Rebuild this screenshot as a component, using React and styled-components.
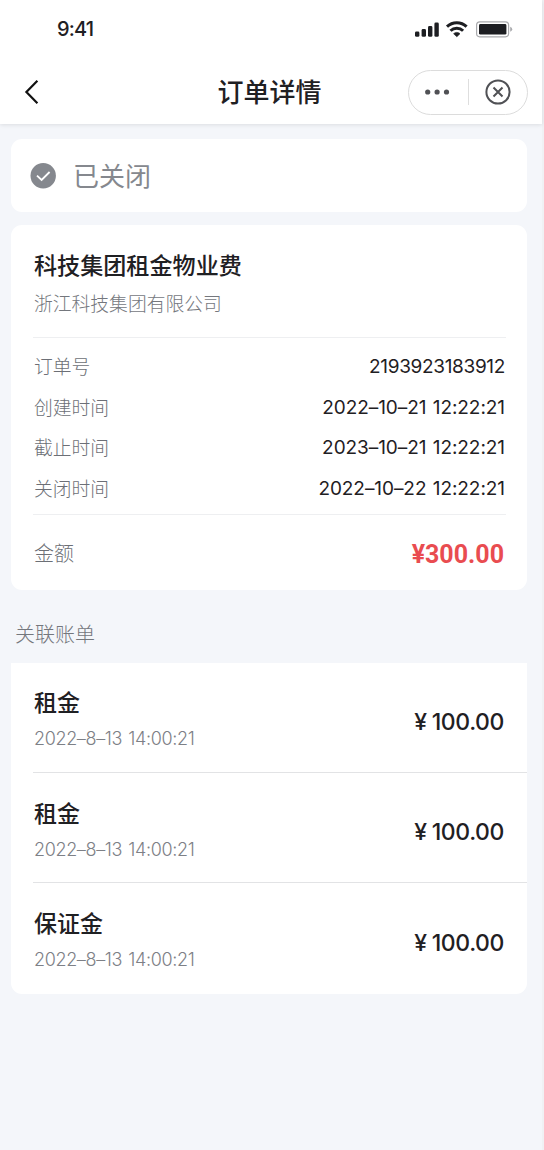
import React from "react";
import styled, { createGlobalStyle } from "styled-components";

const GlobalStyle = createGlobalStyle`
    * {
        box-sizing: border-box;
    }

    body {
        margin: 0;
        background-color: #f4f6fa;
        font-family: "Inter", "Noto Sans CJK SC", sans-serif;
        color: #1f2023;
    }
`;

const Page = styled.div`
    min-height: 1150px;
    background-color: #f4f6fa;
    border-right: 2px solid #f0f1f4;
`;

const Header = styled.header`
    height: 124px;
    background-color: #fff;
    box-shadow: 0 1px 4px rgba(0, 0, 0, 0.1);
`;

const StatusBar = styled.div`
    display: flex;
    justify-content: space-between;
    align-items: center;
    height: 58px;
    padding: 0 29px 0 57px;
`;

const Clock = styled.span`
    font-size: 20px;
    font-weight: 480;
    letter-spacing: -0.8px;
`;

const NavBar = styled.div`
    display: grid;
    grid-template-columns: 131px 1fr 134px;
    align-items: center;
    height: 66px;
    padding: 2px 0 0;
`;

const BackButton = styled.button`
    display: flex;
    width: 44px;
    padding: 0 0 0 24px;
    border: none;
    background: none;
`;

const Title = styled.h1`
    margin: 0;
    padding-top: 1px;
    text-align: center;
    font-size: 26px;
    line-height: 36px;
    font-weight: 500;
`;

const Capsule = styled.div`
    display: flex;
    align-items: center;
    width: 120px;
    height: 45px;
    border: 1px solid #dcdcdc;
    border-radius: 23px;
`;

const CapsuleItem = styled.div`
    flex: 1;
    display: flex;
    justify-content: center;
`;

const CapsuleLine = styled.div`
    width: 1px;
    height: 26px;
    background-color: #dedede;
`;

const Main = styled.main`
    padding: 15px 15px 0 11px;
`;

const StatusCard = styled.section`
    display: flex;
    align-items: center;
    gap: 17px;
    height: 73px;
    padding: 0 19px;
    border-radius: 11px;
    background-color: #fff;
`;

const StatusText = styled.span`
    padding-top: 2px;
    font-size: 26px;
    line-height: 36px;
    color: #85888e;
`;

const DetailCard = styled.section`
    height: 365px;
    margin-top: 13px;
    padding: 24px 21px 0 22px;
    border-radius: 11px;
    background-color: #fff;
`;

const OrderName = styled.h2`
    margin: 0;
    padding-left: 1px;
    font-size: 23.1px;
    line-height: 34px;
    font-weight: 500;
`;

const Company = styled.p`
    margin: 8px 0 18px;
    padding-left: 1px;
    font-size: 18.8px;
    line-height: 28px;
    font-weight: 300;
    color: #74777d;
`;

const InfoList = styled.div`
    padding: 7px 0 6px;
    border-top: 1px solid #eeeff1;
    border-bottom: 1px solid #eeeff1;
`;

const InfoRow = styled.div`
    display: flex;
    justify-content: space-between;
    align-items: center;
    height: 40.7px;
    padding: 0 1px;
`;

const Label = styled.span`
    font-size: 18.8px;
    font-weight: 300;
    color: #6c6f76;
`;

const Value = styled.span`
    padding-top: 2px;
    font-size: 19px;
    font-weight: 400;
    letter-spacing: ${({ $date }) => ($date ? "-0.06px" : "-0.33px")};
    word-spacing: 1px;
`;

const AmountRow = styled.div`
    display: flex;
    justify-content: space-between;
    align-items: center;
    height: 76px;
    padding: 0 2px 0 1px;
`;

const AmountLabel = styled.span`
    font-size: 20px;
    font-weight: 300;
    color: #6c6f76;
`;

const Amount = styled.span`
    padding-top: 3px;
    font-family: "Roboto", sans-serif;
    font-size: 25px;
    font-weight: 700;
    color: #e94c50;
`;

const SectionTitle = styled.h3`
    margin: 30px 0 12.5px 4px;
    font-size: 20px;
    line-height: 30px;
    font-weight: 300;
    color: #74777d;
`;

const BillList = styled.ul`
    margin: 0;
    padding: 0 0 0 22px;
    list-style: none;
    border-radius: 0 0 11px 11px;
    background-color: #fff;
`;

const BillItem = styled.li`
    display: flex;
    justify-content: space-between;
    align-items: center;
    height: 110.4px;
    padding: 5px 23px 0 1px;
    border-bottom: 1px solid #e2e3e5;

    &:last-child {
        border-bottom: none;
    }
`;

const BillName = styled.div`
    font-size: 23px;
    line-height: 34px;
    font-weight: 500;
`;

const BillTime = styled.div`
    margin-top: 5px;
    font-size: 18px;
    line-height: 28px;
    font-weight: 330;
    letter-spacing: -0.35px;
    word-spacing: 1.5px;
    color: #7d8086;
`;

const BillPrice = styled.div`
    display: flex;
    gap: 5px;
    padding-top: 4px;
    font-size: 23px;
    font-weight: 470;
    letter-spacing: -0.4px;
`;

const infos = [
    { label: "订单号", value: "2193923183912" },
    { label: "创建时间", value: "2022–10–21 12:22:21", date: true },
    { label: "截止时间", value: "2023–10–21 12:22:21", date: true },
    { label: "关闭时间", value: "2022–10–22 12:22:21", date: true },
];

const bills = [
    { name: "租金", time: "2022–8–13 14:00:21", price: "100.00" },
    { name: "租金", time: "2022–8–13 14:00:21", price: "100.00" },
    { name: "保证金", time: "2022–8–13 14:00:21", price: "100.00" },
];

const StatusIcons = () => (
    <svg width="100" height="18" viewBox="0 0 100 18">
        {/* 信号 */}
        <g fill="#1d1e22">
            <rect x="2" y="11.5" width="4.4" height="5.3" rx="1.4" />
            <rect x="8.6" y="9" width="4.4" height="7.8" rx="1.4" />
            <rect x="15" y="6" width="4.4" height="10.8" rx="1.4" />
            <rect x="21.4" y="2.5" width="4.4" height="14.3" rx="1.4" />
        </g>
        {/* wifi */}
        <g fill="none" stroke="#1d1e22" strokeWidth="3">
            <path d="M34 6.6a14.2 14.2 0 0 1 19.6 0" />
            <path d="M37.5 10.8a9 9 0 0 1 12.6 0" />
        </g>
        <path d="M40.6 13.7a4.6 4.6 0 0 1 6.4 0l-3.2 3.1z" fill="#1d1e22" stroke="#1d1e22" strokeWidth="0.6" strokeLinejoin="round" />
        {/* 电池 */}
        <rect x="63.6" y="1.8" width="32" height="15" rx="3.2" fill="none" stroke="#a9aaad" strokeWidth="1.2" />
        <rect x="66" y="4" width="27.4" height="10.6" rx="1.4" fill="#1d1e22" />
        <path d="M97.2 6.8q2 .8 2 2.5t-2 2.5z" fill="#a9aaad" />
    </svg>
);

const App = () => {
    return (
        <>
            <GlobalStyle />
            <Page>
                <Header>
                    <StatusBar>
                        <Clock>9:41</Clock>
                        <StatusIcons />
                    </StatusBar>
                    <NavBar>
                        <BackButton>
                            <svg width="15" height="26" viewBox="0 0 15 26">
                                <path d="M13.4 1.8 2.4 13l11 11.2" fill="none" stroke="#111" strokeWidth="2.2" />
                            </svg>
                        </BackButton>
                        <Title>订单详情</Title>
                        <Capsule>
                            <CapsuleItem>
                                <svg width="26" height="6" viewBox="0 0 26 6" fill="#505155">
                                    <circle cx="2.7" cy="3" r="2.6" />
                                    <circle cx="12.1" cy="3" r="2.6" />
                                    <circle cx="21.5" cy="3" r="2.6" />
                                </svg>
                            </CapsuleItem>
                            <CapsuleLine />
                            <CapsuleItem>
                                <svg width="26" height="26" viewBox="0 0 26 26" fill="none" stroke="#505155" strokeWidth="2">
                                    <circle cx="13" cy="13" r="11.6" />
                                    <path d="m8.5 8.5 9 9m0-9-9 9" />
                                </svg>
                            </CapsuleItem>
                        </Capsule>
                    </NavBar>
                </Header>
                <Main>
                    <StatusCard>
                        <svg width="26" height="26" viewBox="0 0 26 26">
                            <circle cx="13.2" cy="12.8" r="12.7" fill="#85888e" />
                            <path d="m7 12.6 4.6 4.4 8-8" fill="none" stroke="#fff" strokeWidth="1.8" />
                        </svg>
                        <StatusText>已关闭</StatusText>
                    </StatusCard>
                    <DetailCard>
                        <OrderName>科技集团租金物业费</OrderName>
                        <Company>浙江科技集团有限公司</Company>
                        <InfoList>
                            {infos.map((info) => (
                                <InfoRow key={info.label}>
                                    <Label>{info.label}</Label>
                                    <Value $date={info.date}>{info.value}</Value>
                                </InfoRow>
                            ))}
                        </InfoList>
                        <AmountRow>
                            <AmountLabel>金额</AmountLabel>
                            <Amount>¥300.00</Amount>
                        </AmountRow>
                    </DetailCard>
                    <SectionTitle>关联账单</SectionTitle>
                    <BillList>
                        {bills.map((bill, index) => (
                            <BillItem key={index}>
                                <div>
                                    <BillName>{bill.name}</BillName>
                                    <BillTime>{bill.time}</BillTime>
                                </div>
                                <BillPrice>
                                    <span>¥</span>
                                    <span>{bill.price}</span>
                                </BillPrice>
                            </BillItem>
                        ))}
                    </BillList>
                </Main>
            </Page>
        </>
    );
};

export default App;
